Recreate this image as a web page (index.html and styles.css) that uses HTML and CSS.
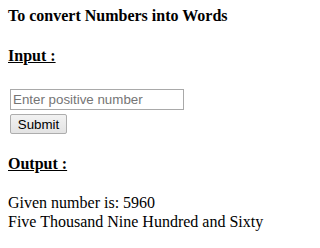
FILE: index.html
```html
<!DOCTYPE html>
<html>
<head>
<meta charset="utf-8">
<link rel="stylesheet" href="styles.css">
</head>
<body>
<h4 class="title">To convert Numbers into Words</h4>
<h4 class="section"><u>Input :</u></h4>
<form class="form">
  <input class="field" type="text" placeholder="Enter positive number">
  <button class="submit" type="button">Submit</button>
</form>
<h4 class="section"><u>Output :</u></h4>
<div class="result">
  <div>Given number is: 5960</div>
  <div>Five Thousand Nine Hundred and Sixty</div>
</div>
</body>
</html>
```

FILE: styles.css
```css
html, body {
  background: #ffffff;
}
body {
  margin: 8px;
  font-family: "Liberation Serif", "Times New Roman", serif;
  font-size: 16px;
  color: #000000;
}
.title {
  margin: 0;
  font-size: 16px;
  font-weight: bold;
  line-height: 18px;
  position: relative;
  top: -1px;
}
.section {
  margin: 21px 0;
  font-size: 16px;
  font-weight: bold;
  line-height: 18px;
}
.section u {
  text-decoration: underline;
}
.form {
  display: flex;
  flex-direction: column;
  align-items: flex-start;
  gap: 4px;
  padding: 3px 0 0 2px;
  margin: 0;
}
.field {
  box-sizing: border-box;
  width: 174px;
  height: 21px;
  margin: 0;
  padding: 1px 2px;
  border: 1px solid #a9a9a9;
  font-family: "Liberation Sans", Arial, sans-serif;
  font-size: 13.33px;
  color: #000;
  background: #fff;
  outline: none;
}
.field::placeholder {
  color: #757575;
}
.submit {
  box-sizing: border-box;
  width: 57px;
  height: 20px;
  margin: 0;
  padding: 0 6px;
  border: 1px solid #adadad;
  border-radius: 2px;
  background: linear-gradient(#f2f2f2, #e3e3e3);
  font-family: "Liberation Sans", Arial, sans-serif;
  font-size: 13.33px;
  color: #000;
}
.result {
  line-height: 18.5px;
}
```
